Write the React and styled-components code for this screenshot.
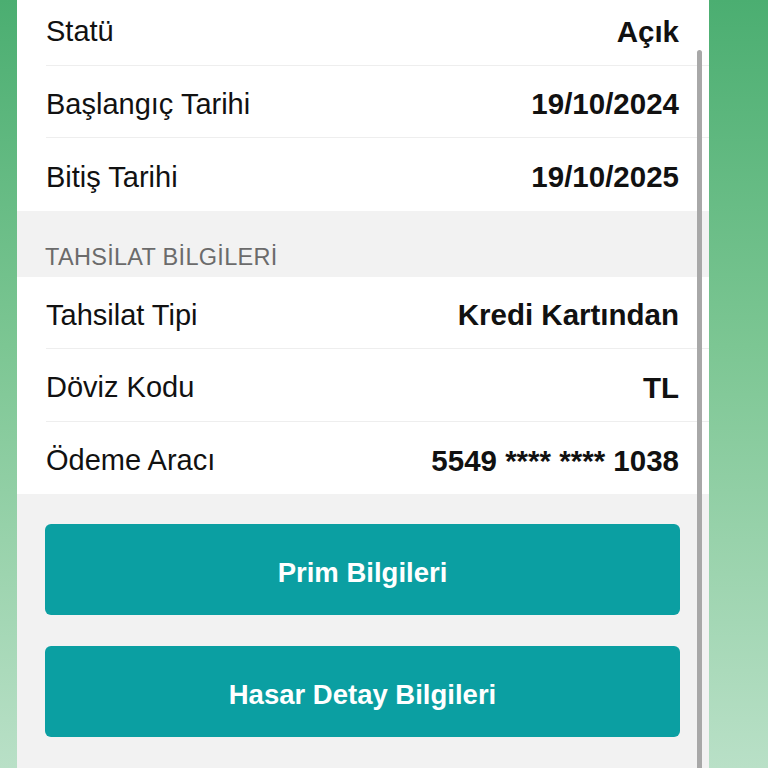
import React from 'react';
import styled, { createGlobalStyle } from 'styled-components';

const GlobalStyle = createGlobalStyle`
  html, body {
    margin: 0;
    padding: 0;
    height: 100%;
    overflow: hidden;
  }
  body {
    font-family: 'Liberation Sans', Arial, sans-serif;
  }
`;

const policyRows = [
  { label: 'Statü', value: 'Açık' },
  { label: 'Başlangıç Tarihi', value: '19/10/2024' },
  { label: 'Bitiş Tarihi', value: '19/10/2025' },
];

const paymentRows = [
  { label: 'Tahsilat Tipi', value: 'Kredi Kartından' },
  { label: 'Döviz Kodu', value: 'TL' },
  { label: 'Ödeme Aracı', value: '5549 **** **** 1038' },
];

const buttons = ['Prim Bilgileri', 'Hasar Detay Bilgileri', 'Teminat Bilgileri'];

const App = () => (
  <>
    <GlobalStyle />
    <Screen>
      <Sheet>
        <Content>
          <Group>
            {policyRows.map(r => (
              <Row key={r.label}>
                <Label>{r.label}</Label>
                <Value>{r.value}</Value>
              </Row>
            ))}
          </Group>
          <SectionHeader>TAHSİLAT BİLGİLERİ</SectionHeader>
          <Group>
            {paymentRows.map(r => (
              <Row key={r.label}>
                <Label>{r.label}</Label>
                <Value>{r.value}</Value>
              </Row>
            ))}
          </Group>
          <Actions>
            {buttons.map(b => (
              <ActionBtn key={b}>{b}</ActionBtn>
            ))}
          </Actions>
        </Content>
        <ScrollBar />
      </Sheet>
    </Screen>
  </>
);

const Screen = styled.div`
  width: 768px;
  height: 768px;
  overflow: hidden;
  background: linear-gradient(180deg, #4bae71 0%, #7cc693 45%, #b9e0c7 100%);
  display: flex;
  justify-content: flex-start;
`;

const Sheet = styled.div`
  position: relative;
  margin-left: 17px;
  width: 692px;
  height: 100%;
  background: #f2f2f2;
  overflow: hidden;
`;

const Content = styled.div`
  margin-top: -7px;
  display: flex;
  flex-direction: column;
`;

const Group = styled.div`
  background: #ffffff;
  padding-left: 29px;
`;

const Row = styled.div`
  height: 72.5px;
  display: flex;
  align-items: center;
  justify-content: space-between;
  padding: 6px 30px 0 0;
  box-sizing: border-box;
  border-bottom: 1px solid #eeeeee;

  &:last-child {
    border-bottom: none;
  }
`;

const Label = styled.span`
  font-size: 29px;
  color: #111111;
`;

const Value = styled.span`
  font-size: 29.5px;
  font-weight: 700;
  color: #111111;
`;

const SectionHeader = styled.div`
  height: 66px;
  box-sizing: border-box;
  padding: 0 0 6px 28px;
  display: flex;
  align-items: flex-end;
  font-size: 23.5px;
  color: #6b6b6b;
  letter-spacing: 0.3px;
  background: #f2f2f2;
`;

const Actions = styled.div`
  padding: 30px 29px 0 28px;
  display: flex;
  flex-direction: column;
  gap: 31px;
`;

const ActionBtn = styled.button`
  height: 91px;
  width: 100%;
  padding-top: 7px;
  border: none;
  border-radius: 6px;
  background: #0b9fa2;
  color: #ffffff;
  font-family: 'Liberation Sans', Arial, sans-serif;
  font-size: 27.5px;
  font-weight: 700;
  cursor: pointer;
`;

const ScrollBar = styled.div`
  position: absolute;
  top: 50px;
  right: 7px;
  width: 5px;
  height: 760px;
  border-radius: 3px;
  background: #a8a8a8;
`;

export default App;
